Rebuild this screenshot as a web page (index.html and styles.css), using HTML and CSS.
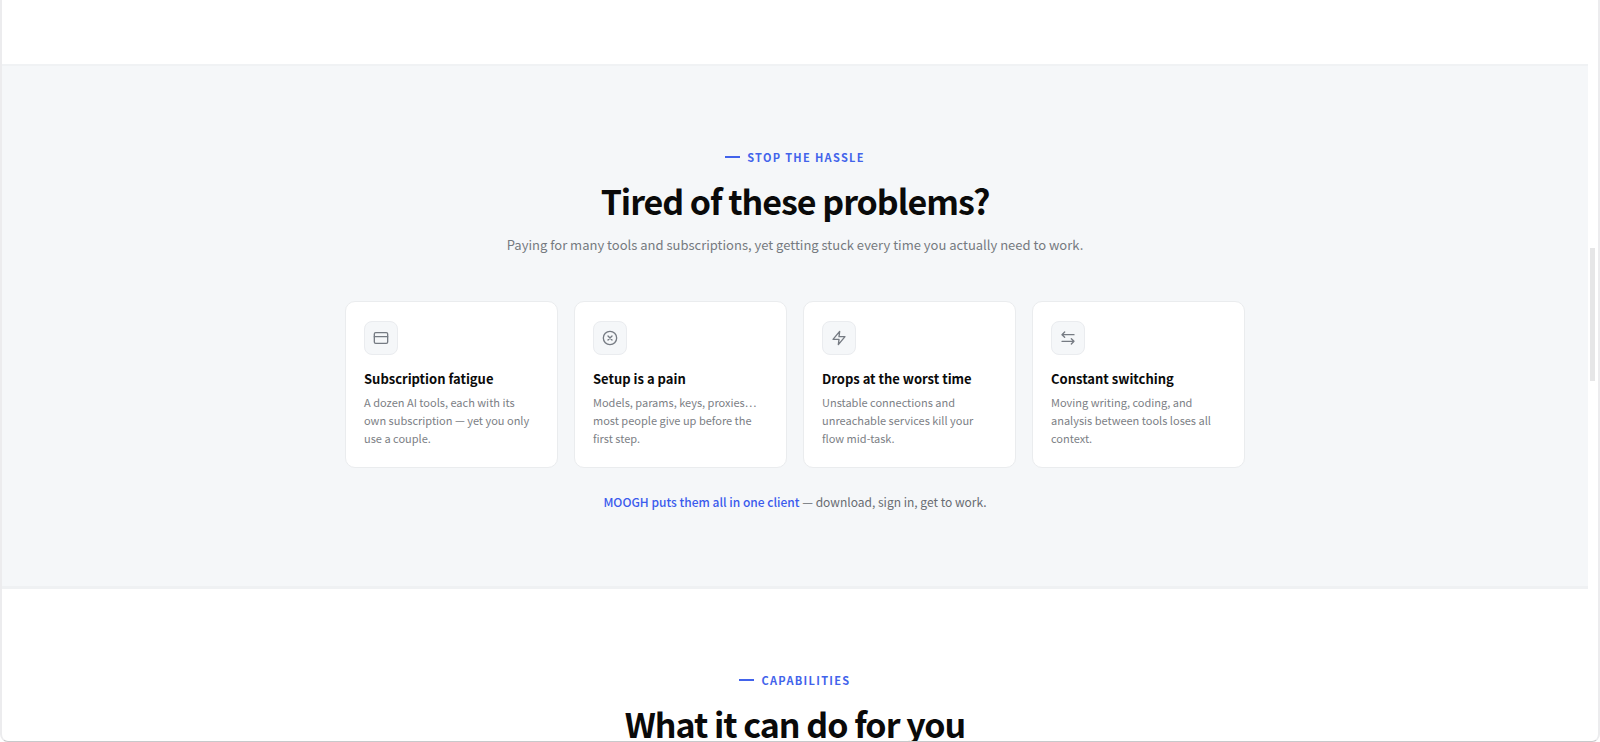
FILE: index.html
```
<!DOCTYPE html>
<html lang="en">
<head>
    <meta charset="UTF-8">
    <meta name="viewport" content="width=device-width, initial-scale=1.0">
    <title>MOOGH</title>
    <link rel="stylesheet" href="styles.css">
</head>
<body>
    <div class="window">
        <main class="page">
            <section class="problems">
                <div class="container">
                    <p class="eyebrow">Stop the hassle</p>
                    <h2>Tired of these problems?</h2>
                    <p class="lead">Paying for many tools and subscriptions, yet getting stuck every time you actually need to work.</p>
                    <div class="cards">
                        <article class="card">
                            <div class="icon">
                                <svg viewBox="0 0 24 24"><rect x="2" y="4" width="20" height="16" rx="2"/><path d="M2 10h20"/></svg>
                            </div>
                            <h3>Subscription fatigue</h3>
                            <p>A dozen AI tools, each with its own subscription — yet you only use a couple.</p>
                        </article>
                        <article class="card">
                            <div class="icon">
                                <svg viewBox="0 0 24 24"><circle cx="12" cy="12" r="10"/><path d="M9 9l6 6M15 9l-6 6"/></svg>
                            </div>
                            <h3>Setup is a pain</h3>
                            <p>Models, params, keys, proxies… most people give up before the first step.</p>
                        </article>
                        <article class="card">
                            <div class="icon">
                                <svg viewBox="0 0 24 24"><path d="M13 2L3 14h9l-1 8 10-12h-9l1-8z"/></svg>
                            </div>
                            <h3>Drops at the worst time</h3>
                            <p>Unstable connections and unreachable services kill your flow mid-task.</p>
                        </article>
                        <article class="card">
                            <div class="icon">
                                <svg viewBox="0 0 24 24"><path d="M7 3L3 7l4 4M3 7h18M17 13l4 4-4 4M21 17H3"/></svg>
                            </div>
                            <h3>Constant switching</h3>
                            <p>Moving writing, coding, and analysis between tools loses all context.</p>
                        </article>
                    </div>
                    <p class="note"><strong>MOOGH puts them all in one client</strong> — download, sign in, get to work.</p>
                </div>
            </section>
            <section class="capabilities">
                <div class="container">
                    <p class="eyebrow">Capabilities</p>
                    <h2>What it can do for you</h2>
                </div>
            </section>
        </main>
        <div class="scrollbar"></div>
    </div>
</body>
</html>
```
FILE: styles.css
```
* {
    margin: 0;
    padding: 0;
    box-sizing: border-box;
}

body {
    font-family: "Noto Sans CJK SC", sans-serif;
    background-color: #fff;
    color: #0a0a0a;
}

/* Window frame */
.window {
    position: relative;
    height: 100vh;
    overflow: hidden;
    border: 2px solid #ececee;
    border-top: none;
    border-bottom: 1px solid #c8c9cb;
    border-radius: 0 0 8px 8px;
}

.page {
    margin-right: 10px;
    padding-top: 64px;
}

.scrollbar {
    position: absolute;
    top: 248px;
    right: 3px;
    width: 5px;
    height: 133px;
    background-color: #e6e6e7;
}

/* Sections */
section {
    padding: 80px 24px 72px;
}

.problems {
    background-color: #f5f7f9;
    border-top: 2px solid #f0f2f4;
    border-bottom: 3px solid #eff1f3;
}

.container {
    max-width: 900px;
    margin: 0 auto;
    text-align: center;
}

.eyebrow {
    display: flex;
    justify-content: center;
    align-items: center;
    gap: 7px;
    font-size: 11px;
    font-weight: 700;
    line-height: 22px;
    letter-spacing: 0.12em;
    text-transform: uppercase;
    color: #4263eb;
}

.eyebrow::before {
    content: "";
    width: 15px;
    height: 2px;
    background-color: #4263eb;
}

h2 {
    margin-top: 9px;
    font-size: 34px;
    font-weight: 700;
    line-height: 48px;
    letter-spacing: -0.03em;
}

.lead {
    margin-top: 8px;
    font-size: 13px;
    line-height: 24px;
    color: #757a80;
}

/* Cards */
.cards {
    display: grid;
    grid-template-columns: repeat(4, 1fr);
    gap: 16px;
    margin-top: 44px;
    text-align: left;
}

.card {
    padding: 19px 18px 20px;
    background-color: #fff;
    border: 1px solid #eaecee;
    border-radius: 10px;
}

.icon {
    display: flex;
    justify-content: center;
    align-items: center;
    width: 34px;
    height: 34px;
    background-color: #f5f7f9;
    border: 1px solid #eaecef;
    border-radius: 8px;
}

.icon svg {
    width: 16px;
    height: 16px;
    fill: none;
    stroke: #767b83;
    stroke-width: 2;
    stroke-linecap: round;
    stroke-linejoin: round;
}

.card h3 {
    margin-top: 12px;
    font-size: 13px;
    font-weight: 700;
    line-height: 24px;
}

.card p {
    margin-top: 2px;
    font-size: 11px;
    line-height: 18px;
    color: #7c8085;
}

.note {
    margin-top: 22px;
    font-size: 12px;
    line-height: 24px;
    color: #686c72;
}

.note strong {
    font-weight: 500;
    color: #3b5bed;
}
```
